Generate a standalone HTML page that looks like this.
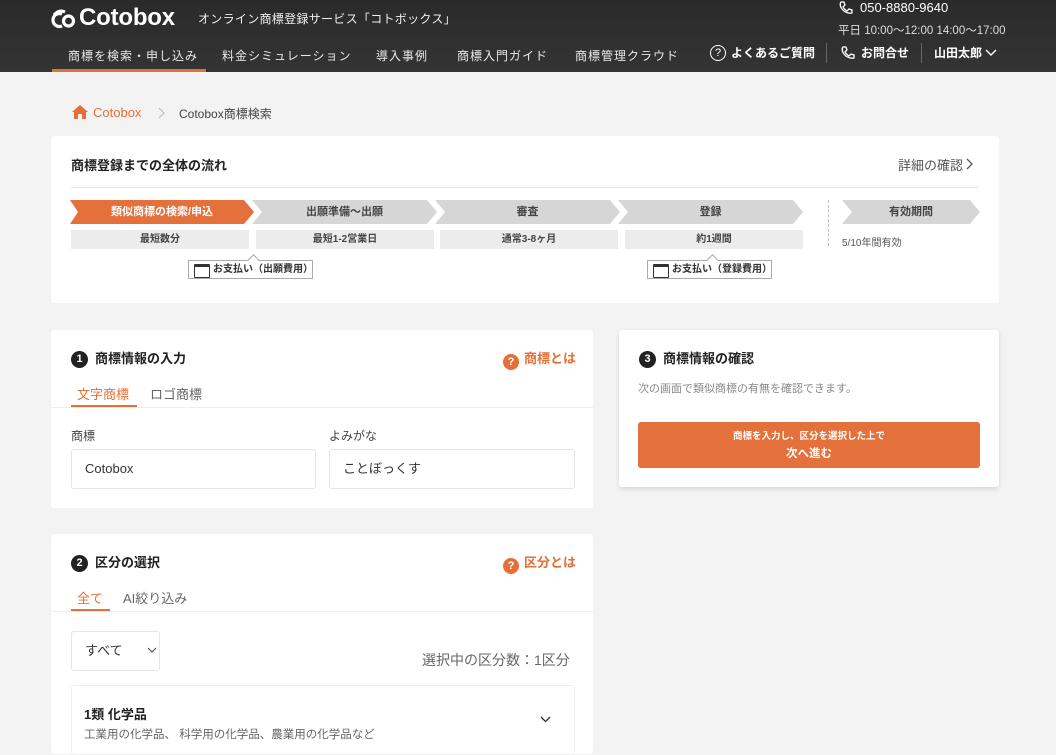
<!DOCTYPE html>
<html><head><meta charset="utf-8"><style>
*{box-sizing:border-box;margin:0;padding:0}
body{width:1056px;height:744px;overflow:hidden;background:#f3f3f3;font-family:"Liberation Sans","Noto Sans CJK JP",sans-serif;color:#333;position:relative}
.a{position:absolute;white-space:nowrap}
header{position:absolute;left:0;top:0;width:1056px;height:72px;background:linear-gradient(#2a2a2a,#343434)}
.w{color:#fff}
.card{position:absolute;background:#fff;border-radius:3px}
.step{position:absolute;top:200px;height:24px;clip-path:polygon(0 0,calc(100% - 10px) 0,100% 50%,calc(100% - 10px) 100%,0 100%,10px 50%);background:#d6d6d6;color:#444;font-size:11px;font-weight:bold;text-align:center;line-height:24px}
.sub{position:absolute;top:230px;height:19px;background:#ececec;font-size:10px;font-weight:bold;color:#444;text-align:center;line-height:19px}
.pay{position:absolute;top:260px;height:19px;border:1px solid #aaa;background:#fff;font-size:10px;font-weight:bold;line-height:17px;padding-left:24px}
.pay:before{content:"";position:absolute;left:5px;top:3px;width:14px;height:10px;border:1.5px solid #333;border-top-width:3px;border-radius:1px}
.pay:after{content:"";position:absolute;left:60px;top:-5px;width:8px;height:8px;background:#fff;border-left:1px solid #aaa;border-top:1px solid #aaa;transform:rotate(45deg)}
.num{display:inline-block;width:17px;height:17px;border-radius:50%;background:#222;color:#fff;font-size:11px;text-align:center;line-height:17px;font-weight:bold;margin-right:7px;vertical-align:1px}
.h{font-size:13px;font-weight:bold;color:#222}
.q{color:#e56f37;font-size:13px;font-weight:bold}
.q i{display:inline-block;width:16px;height:16px;border-radius:50%;background:#e56f37;color:#fff;font-style:normal;font-size:11px;text-align:center;line-height:16px;margin-right:5px;vertical-align:-2px}
.inp{position:absolute;border:1px solid #e6e6e6;border-radius:3px;font-size:13px;color:#333;padding-left:13px;line-height:38px}
</style></head><body>
<header>
<svg class="a" style="left:51px;top:9px" width="26" height="20" viewBox="0 0 26 20"><path d="M11 5 A6.5 6.5 0 1 0 11 17" fill="none" stroke="#fff" stroke-width="3.2"/><circle cx="17.5" cy="12" r="5" fill="none" stroke="#fff" stroke-width="3.2"/><path d="M3 6 Q8 0 14 3" fill="none" stroke="#fff" stroke-width="3"/></svg>
<div class="a w" style="left:79px;top:4px;font-size:24px;font-weight:bold;letter-spacing:-0.2px">Cotobox</div>
<div class="a w" style="left:198px;top:10px;font-size:12px;color:#eee;letter-spacing:0.3px">オンライン商標登録サービス「コトボックス」</div>
<svg class="a" style="left:838px;top:0px" width="16" height="16" viewBox="0 0 16 16"><path d="M3 2 L6 2 L7 5 L5 7 Q7 10 9 11 L11 9 L14 10 L14 13 Q8 14 4 9 Q1 5 3 2Z" fill="none" stroke="#fff" stroke-width="1.3"/></svg>
<div class="a w" style="left:860px;top:0px;font-size:13px">050-8880-9640</div>
<div class="a" style="left:838px;top:22px;font-size:11.5px;color:#ddd">平日 10:00〜12:00 14:00〜17:00</div>
<div class="a" style="left:68px;top:47px;font-size:12px;color:#e8e8e8;letter-spacing:1px">商標を検索・申し込み</div>
<div class="a" style="left:222px;top:47px;font-size:12px;color:#e8e8e8;letter-spacing:1px">料金シミュレーション</div>
<div class="a" style="left:376px;top:47px;font-size:12px;color:#e8e8e8;letter-spacing:1px">導入事例</div>
<div class="a" style="left:457px;top:47px;font-size:12px;color:#e8e8e8;letter-spacing:1px">商標入門ガイド</div>
<div class="a" style="left:575px;top:47px;font-size:12px;color:#e8e8e8;letter-spacing:1px">商標管理クラウド</div>
<div class="a" style="left:52px;top:69px;width:154px;height:3px;background:#e56f37"></div>
<div class="a w" style="left:710px;top:45px;width:16px;height:16px;border:1.3px solid #fff;border-radius:50%;font-size:11px;text-align:center;line-height:14px">?</div>
<div class="a w" style="left:731px;top:44px;font-size:12px;font-weight:bold">よくあるご質問</div>
<div class="a" style="left:826px;top:43px;width:1px;height:20px;background:#666"></div>
<svg class="a" style="left:840px;top:45px" width="16" height="16" viewBox="0 0 16 16"><path d="M3 2 L6 2 L7 5 L5 7 Q7 10 9 11 L11 9 L14 10 L14 13 Q8 14 4 9 Q1 5 3 2Z" fill="none" stroke="#fff" stroke-width="1.3"/></svg>
<div class="a w" style="left:861px;top:44px;font-size:12px;font-weight:bold">お問合せ</div>
<div class="a" style="left:921px;top:43px;width:1px;height:20px;background:#666"></div>
<div class="a w" style="left:934px;top:44px;font-size:12px;font-weight:bold">山田太郎</div>
<svg class="a" style="left:985px;top:49px" width="12" height="8"><path d="M1 1 L6 6 L11 1" fill="none" stroke="#fff" stroke-width="1.4"/></svg>
</header>

<svg class="a" style="left:72px;top:105px" width="16" height="14" viewBox="0 0 16 14"><path d="M8 0 L16 7 L14 7 L14 14 L10 14 L10 9 L6 9 L6 14 L2 14 L2 7 L0 7Z" fill="#e56f37"/></svg>
<div class="a" style="left:93px;top:105px;font-size:13px;color:#e56f37">Cotobox</div>
<svg class="a" style="left:158px;top:107px" width="8" height="12"><path d="M1 1 L6 6 L1 11" fill="none" stroke="#bbb" stroke-width="1.2"/></svg>
<div class="a" style="left:179px;top:105px;font-size:12px;color:#444">Cotobox商標検索</div>

<div class="card" style="left:51px;top:136px;width:948px;height:167px"></div>
<div class="a h" style="left:71px;top:155px">商標登録までの全体の流れ</div>
<div class="a" style="left:898px;top:155px;font-size:13px;color:#555">詳細の確認</div>
<svg class="a" style="left:966px;top:158px" width="8" height="12"><path d="M1 1 L6 6 L1 11" fill="none" stroke="#555" stroke-width="1.3"/></svg>
<div class="a" style="left:71px;top:187px;width:908px;height:1px;background:#e8e8e8"></div>
<div class="step" style="left:70px;width:184px;background:#e4703c;color:#fff;clip-path:polygon(0 0,calc(100% - 10px) 0,100% 50%,calc(100% - 10px) 100%,0 100%,8px 50%)">類似商標の検索/申込</div>
<div class="step" style="left:252px;width:185px">出願準備〜出願</div>
<div class="step" style="left:435px;width:185px">審査</div>
<div class="step" style="left:618px;width:185px">登録</div>
<div class="a" style="left:828px;top:200px;height:46px;border-left:1px dashed #bbb"></div>
<div class="step" style="left:842px;width:138px">有効期間</div>
<div class="sub" style="left:71px;width:178px">最短数分</div>
<div class="sub" style="left:256px;width:178px">最短1-2営業日</div>
<div class="sub" style="left:440px;width:178px">通常3-8ヶ月</div>
<div class="sub" style="left:625px;width:178px">約1週間</div>
<div class="a" style="left:842px;top:234px;font-size:10px;color:#555">5/10年間有効</div>
<div class="pay" style="left:188px;width:125px">お支払い（出願費用）</div>
<div class="pay" style="left:647px;width:125px">お支払い（登録費用）</div>

<div class="card" style="left:51px;top:330px;width:542px;height:178px"></div>
<div class="a h" style="left:71px;top:348px"><span class="num">1</span>商標情報の入力</div>
<div class="a q" style="left:503px;top:348px"><i>?</i>商標とは</div>
<div class="a" style="left:77px;top:384px;font-size:13px;color:#e56f37">文字商標</div>
<div class="a" style="left:150px;top:384px;font-size:13px;color:#666">ロゴ商標</div>
<div class="a" style="left:51px;top:407px;width:542px;height:1px;background:#eee"></div>
<div class="a" style="left:71px;top:405px;width:66px;height:2px;background:#e56f37"></div>
<div class="a" style="left:71px;top:427px;font-size:12px;color:#444">商標</div>
<div class="a" style="left:329px;top:427px;font-size:12px;color:#444">よみがな</div>
<div class="inp" style="left:71px;top:449px;width:245px;height:40px">Cotobox</div>
<div class="inp" style="left:329px;top:449px;width:246px;height:40px">ことぼっくす</div>

<div class="card" style="left:619px;top:330px;width:380px;height:157px;box-shadow:0 2px 5px rgba(0,0,0,.12)"></div>
<div class="a h" style="left:639px;top:348px"><span class="num">3</span>商標情報の確認</div>
<div class="a" style="left:638px;top:380px;font-size:11px;color:#888">次の画面で類似商標の有無を確認できます。</div>
<div class="a" style="left:638px;top:422px;width:342px;height:46px;background:#e4703c;border-radius:3px;color:#fff;text-align:center;font-weight:bold">
<div style="font-size:9.5px;margin-top:6px">商標を入力し、区分を選択した上で</div>
<div style="font-size:11.5px;margin-top:3px">次へ進む</div></div>

<div class="card" style="left:51px;top:534px;width:542px;height:220px"></div>
<div class="a h" style="left:71px;top:552px"><span class="num">2</span>区分の選択</div>
<div class="a q" style="left:503px;top:552px"><i>?</i>区分とは</div>
<div class="a" style="left:77px;top:588px;font-size:13px;color:#e56f37">全て</div>
<div class="a" style="left:123px;top:588px;font-size:13px;color:#666">AI絞り込み</div>
<div class="a" style="left:51px;top:611px;width:542px;height:1px;background:#eee"></div>
<div class="a" style="left:71px;top:609px;width:39px;height:2px;background:#e56f37"></div>
<div class="inp" style="left:71px;top:631px;width:89px;height:40px">すべて</div>
<svg class="a" style="left:147px;top:647px" width="10" height="7"><path d="M1 1 L5 5 L9 1" fill="none" stroke="#555" stroke-width="1.2"/></svg>
<div class="a" style="left:422px;top:650px;font-size:14px;color:#666">選択中の区分数：1区分</div>
<div class="a" style="left:71px;top:685px;width:504px;height:70px;border:1px solid #eee;border-radius:3px"></div>
<div class="a" style="left:84px;top:704px;font-size:13px;font-weight:bold;color:#222">1類 化学品</div>
<div class="a" style="left:84px;top:726px;font-size:11.5px;color:#666">工業用の化学品、 科学用の化学品、農業用の化学品など</div>
<svg class="a" style="left:540px;top:716px" width="11" height="7"><path d="M1 1 L5.5 5.5 L10 1" fill="none" stroke="#333" stroke-width="1.3"/></svg>
</body></html>
